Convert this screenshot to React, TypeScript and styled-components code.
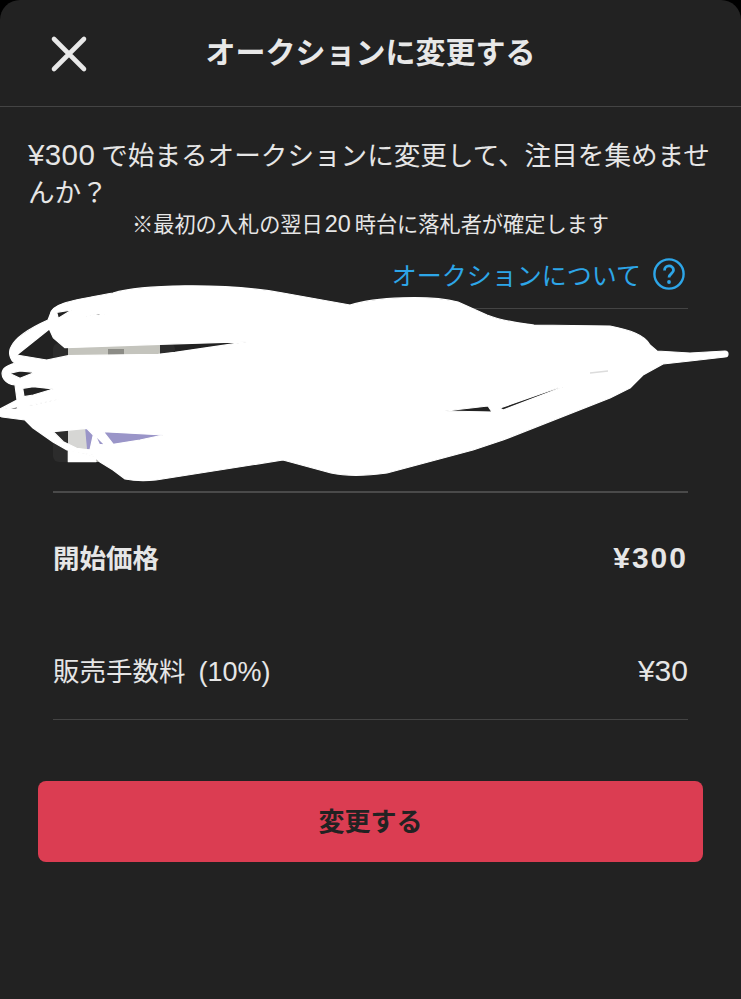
import React from "react";
import styled, { createGlobalStyle } from "styled-components";

const Global = createGlobalStyle`
  html, body { margin: 0; padding: 0; background: #000; }
  body { font-family: "Liberation Sans", "Noto Sans CJK JP", sans-serif; }
`;

const Sheet = styled.div`
  position: relative;
  width: 741px;
  height: 999px;
  overflow: hidden;
  background: #222222;
  border-radius: 20px 20px 0 0;
  color: #e6e6e6;
`;

const Header = styled.header`
  position: relative;
  height: 106px;
  display: flex;
  align-items: center;
  justify-content: center;
  border-bottom: 1px solid #444444;
`;

const CloseButton = styled.button`
  position: absolute;
  left: 50px;
  top: 35px;
  width: 38px;
  height: 38px;
  padding: 0;
  border: 0;
  background: none;
  display: flex;
`;

const Title = styled.h1`
  margin: 0;
  font-size: 30px;
  line-height: 1;
  font-weight: 700;
  color: #e8e8e8;
`;

const Intro = styled.section`
  padding: 29px 0 0 28px;
`;

const Lead = styled.p`
  margin: 0;
  font-size: 26.6px;
  line-height: 37px;
  font-weight: 400;
  width: 690px;
`;

const Amount = styled.span`
  font-size: 29.5px;
  letter-spacing: 0.4px;
  margin-right: 6px;
`;

const Note = styled.p`
  margin: 0 0 2px 104px;
  font-size: 21.2px;
  line-height: 24px;
  white-space: nowrap;
`;

const NoteDigits = styled.span`
  font-size: 23.4px;
  margin: 0 4px 0 2px;
`;

const LinkRow = styled.div`
  height: 69px;
  padding-right: 56px;
  display: flex;
  justify-content: flex-end;
  align-items: center;
  gap: 12px;
  color: #2da6e8;
  font-size: 25px;
  box-sizing: border-box;
`;

const Content = styled.div`
  margin: 0 53px;
`;

const ItemRow = styled.div`
  height: 182px;
  border-top: 1px solid #444444;
  border-bottom: 2px solid #4a4a4a;
  display: flex;
  align-items: flex-start;
`;

const Thumb = styled.svg`
  margin-top: 34px;
  width: 122px;
  height: 119px;
  display: block;
`;

const PriceRow = styled.div<{ $strong?: boolean; $h: number }>`
  height: ${(p) => p.$h}px;
  display: flex;
  justify-content: space-between;
  align-items: center;
  font-size: 26.5px;
  font-weight: ${(p) => (p.$strong ? 700 : 400)};
`;

const PriceValue = styled.span<{ $strong?: boolean }>`
  padding-top: 4px;
  font-size: 30px;
  letter-spacing: ${(p) => (p.$strong ? "2px" : "0")};
`;

const Rate = styled.span`
  margin-left: 13px;
  font-size: 27px;
`;

const Totals = styled.div`
  border-bottom: 1px solid #444444;
`;

const ChangeButton = styled.button`
  display: block;
  margin: 61px 38px 0;
  width: 665px;
  height: 81px;
  padding: 0 0 5px;
  border: 0;
  border-radius: 8px;
  background: #db3d52;
  color: #222222;
  font-family: inherit;
  font-size: 26px;
  font-weight: 700;
`;

const Scribble = styled.svg`
  position: absolute;
  left: 0;
  top: 0;
  pointer-events: none;
`;

const z = (pts: [number, number][]) =>
  "M" + pts.map(([x, y]) => `${(x / 3).toFixed(1)} ${(285 + y / 3).toFixed(1)}`).join(" L") + " Z";

const outer =
  "M50 315 C51 303 75 300 113 293 C140 285 220 282 283 293 L350 305 C375 297 430 295 458 302 L487 315 C505 322 520 323 534 325 L610 326 C630 330 645 335 650 345 L657 351 L690 353 L725 351 C729 351 729 357 725 357 L690 361 L663 364 L643 375 L630 388 L610 398 L503 440 L473 450 L387 473 C365 476 345 476 331 473 L283 460 L156 480 C145 481 135 481 125 479 L113 470 L100 462 L93 455 L67 450 L53 442 L33 428 L25 420 L2 417 L0 416 L0 409 L17 400 L15 385 C5 384 0 376 3 370 C5 366 10 365 15 363 C10 360 8 352 11 347 C15 338 30 328 48 320 Z";

const holes: [number, number][][] = [
  [[170, 82], [215, 75], [175, 100]],
  [[255, 97], [330, 85], [295, 86]],
  [[50, 210], [148, 132], [160, 158], [195, 188], [480, 178], [744, 170], [525, 202], [475, 208], [205, 212], [140, 225]],
  [[28, 265], [60, 258], [105, 262], [60, 280]],
  [[68, 310], [100, 305], [160, 312], [100, 330], [72, 335]],
  [[80, 362], [180, 342], [100, 360]],
  [[15, 372], [55, 365], [50, 372]],
  [[160, 440], [260, 430], [280, 450], [270, 495], [230, 490], [190, 470]],
  [[285, 450], [315, 480], [298, 478]],
  [[310, 440], [490, 450], [420, 465], [340, 478]],
  [[205, 492], [285, 515], [288, 530], [205, 530]],
];

const rightHoles =
  "M445 411 L488 406 L492 412 Z M500 408 L560 387 L563 387 L503 410 Z";

export default function App() {
  return (
    <>
      <Global />
      <Sheet>
        <Header>
          <CloseButton aria-label="閉じる">
            <svg width="38" height="38" viewBox="0 0 38 38">
              <path d="M4 4 L34 34 M34 4 L4 34" stroke="#e8e8e8" strokeWidth="4.6" strokeLinecap="round" />
            </svg>
          </CloseButton>
          <Title>オークションに変更する</Title>
        </Header>
        <Intro>
          <Lead>
            <Amount>¥300</Amount>で始まるオークションに変更して、注目を集めませんか？
          </Lead>
          <Note>
            ※最初の入札の翌日<NoteDigits>20</NoteDigits>時台に落札者が確定します
          </Note>
        </Intro>
        <LinkRow>
          <span>オークションについて</span>
          <svg width="32" height="32" viewBox="0 0 32 32">
            <circle cx="16" cy="16" r="14.6" fill="none" stroke="#2da6e8" strokeWidth="2.4" />
            <path d="M11.5 12.5 C11.5 6.5 20.5 6.5 20.5 12.2 C20.5 15.5 16 15.8 16 19.5" fill="none" stroke="#2da6e8" strokeWidth="2.8" />
            <circle cx="16" cy="24" r="1.9" fill="#2da6e8" />
          </svg>
        </LinkRow>
        <Content>
          <ItemRow>
            <Thumb viewBox="0 0 122 119">
              <rect width="122" height="119" rx="6" fill="#2c2c2c" />
              <rect x="15" width="92" height="119" fill="#d6d6d4" />
              <rect x="15" width="92" height="13" fill="#c4c4bd" />
              <rect x="55" y="6" width="16" height="7" fill="#8c8c86" />
              <rect x="15" y="109" width="92" height="10" fill="#a4a49e" />
              <path d="M32 84 L112 91 L100 97 L60 106 L34 106 Z" fill="#9a95c8" />
            </Thumb>
          </ItemRow>
          <Totals>
            <PriceRow $strong $h={126}>
              <span>開始価格</span>
              <PriceValue $strong>¥300</PriceValue>
            </PriceRow>
            <PriceRow $h={100}>
              <span>
                販売手数料<Rate>(10%)</Rate>
              </span>
              <PriceValue>¥30</PriceValue>
            </PriceRow>
          </Totals>
        </Content>
        <ChangeButton>変更する</ChangeButton>
        <Scribble width="741" height="999" viewBox="0 0 741 999">
          <path
            fill="#ffffff"
            stroke="#ffffff"
            strokeWidth="1.2"
            strokeLinejoin="round"
            fillRule="evenodd"
            d={[outer, ...holes.map(z), rightHoles].join(" ")}
          />
          <path d="M590 373 L608 371" stroke="#dcdcdc" strokeWidth="1.4" fill="none" />
        </Scribble>
      </Sheet>
    </>
  );
}
